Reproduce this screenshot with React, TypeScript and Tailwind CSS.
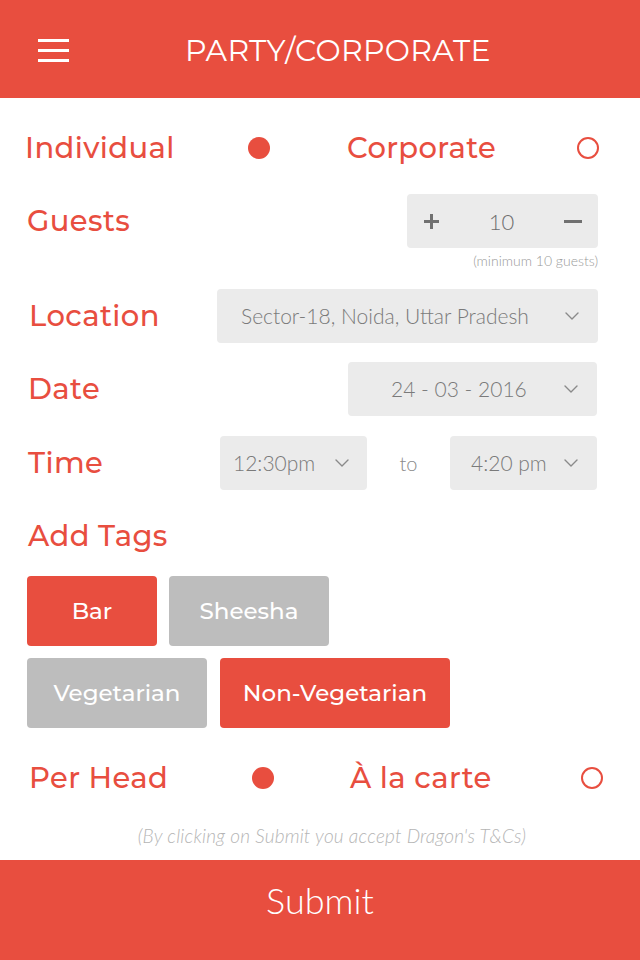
import React from 'react';

const RED = 'text-[#e84e3f]';

function Chevron() {
  return (
    <svg width="16" height="10" viewBox="0 0 16 10" fill="none" className="shrink-0">
      <path d="M2 2l6 6 6-6" stroke="#8a8a8a" strokeWidth="1.4" strokeLinecap="round" strokeLinejoin="round" />
    </svg>
  );
}

function Radio({ on }: { on: boolean }) {
  return on ? (
    <span className="block w-[22px] h-[22px] rounded-full bg-[#e84e3f]" />
  ) : (
    <span className="block w-[22px] h-[22px] rounded-full border-2 border-[#e84e3f]" />
  );
}

function Label({ children, className = '' }: { children: React.ReactNode; className?: string }) {
  return (
    <div className={`text-[29px] font-medium tracking-[0.4px] ${RED} font-['Montserrat','Noto_Sans',sans-serif] ${className}`}>
      {children}
    </div>
  );
}

export default function App() {
  return (
    <div className="w-[640px] h-[960px] bg-white flex flex-col font-['Lato',sans-serif] overflow-hidden">
      {/* header */}
      <header className="h-[98px] bg-[#e84e3f] flex items-center relative shrink-0">
        <div className="absolute left-[38px] top-[39px] flex flex-col gap-[7px]">
          <span className="block w-[31px] h-[3px] bg-white" />
          <span className="block w-[31px] h-[3px] bg-white" />
          <span className="block w-[31px] h-[3px] bg-white" />
        </div>
        <div className="flex-1 text-center pl-[36px] pt-[2px] text-white text-[30px] font-normal tracking-[0.3px] font-['Montserrat',sans-serif]">
          PARTY/CORPORATE
        </div>
      </header>

      <main className="flex-1 flex flex-col">
        {/* individual / corporate */}
        <div className="flex items-center h-[50px] mt-[25px] pl-[25px] pr-[41px]">
          <Label className="w-[223px]">Individual</Label>
          <Radio on />
          <Label className="ml-[77px] flex-1">Corporate</Label>
          <Radio on={false} />
        </div>

        {/* guests */}
        <div className="flex items-center mt-[21px] pl-[27px] pr-[42px]">
          <Label className="flex-1">Guests</Label>
          <div className="w-[191px] h-[54px] rounded-[4px] bg-[#ebebeb] flex items-center justify-between pl-[17px] pr-[16px] text-[#6e6e6e]">
            <span className="relative block w-[15px] h-[15px]">
              <span className="absolute left-0 top-[6px] w-[15px] h-[3px] bg-[#707070]" />
              <span className="absolute left-[6px] top-0 w-[3px] h-[15px] bg-[#707070]" />
            </span>
            <span className="text-[22px] font-light">10</span>
            <span className="block w-[18px] h-[3px] bg-[#707070]" />
          </div>
        </div>
        <div className="text-right pr-[42px] text-[14px] text-[#9a9a9a] font-light mt-[2px]">(minimum 10 guests)</div>

        {/* location */}
        <div className="flex items-center mt-[18px] pl-[29px] pr-[42px]">
          <Label className="flex-1">Location</Label>
          <div className="w-[381px] h-[54px] rounded-[4px] bg-[#ebebeb] flex items-center pl-[24px] pr-[18px] text-[#7a7a7a]">
            <span className="flex-1 text-[21px] font-light">Sector-18, Noida, Uttar Pradesh</span>
            <Chevron />
          </div>
        </div>

        {/* date */}
        <div className="flex items-center mt-[19px] pl-[28px] pr-[43px]">
          <Label className="flex-1">Date</Label>
          <div className="w-[249px] h-[54px] rounded-[4px] bg-[#ebebeb] flex items-center pl-[43px] pr-[18px] text-[#7a7a7a]">
            <span className="flex-1 text-[21px] font-light">24 - 03 - 2016</span>
            <Chevron />
          </div>
        </div>

        {/* time */}
        <div className="flex items-center mt-[20px] pl-[28px] pr-[43px]">
          <Label className="flex-1">Time</Label>
          <div className="w-[147px] h-[54px] rounded-[4px] bg-[#ebebeb] flex items-center pl-[13px] pr-[17px] text-[#7a7a7a]">
            <span className="flex-1 text-[21px] font-light">12:30pm</span>
            <Chevron />
          </div>
          <span className="w-[83px] text-center text-[20px] font-light text-[#8a8a8a]">to</span>
          <div className="w-[147px] h-[54px] rounded-[4px] bg-[#ebebeb] flex items-center pl-[21px] pr-[18px] text-[#7a7a7a]">
            <span className="flex-1 text-[21px] font-light">4:20 pm</span>
            <Chevron />
          </div>
        </div>

        {/* tags */}
        <Label className="pl-[28px] mt-[24px] leading-[44px]">Add Tags</Label>
        <div className="flex flex-col gap-[12px] pl-[27px] mt-[18px] font-['Montserrat','Noto_Sans',sans-serif] text-white text-[23px] font-medium">
          <div className="flex gap-[12px]">
            <div className="w-[130px] h-[70px] rounded-[4px] bg-[#e84e3f] flex items-center justify-center">Bar</div>
            <div className="w-[160px] h-[70px] rounded-[4px] bg-[#bdbdbd] flex items-center justify-center">Sheesha</div>
          </div>
          <div className="flex gap-[13px]">
            <div className="w-[180px] h-[70px] rounded-[4px] bg-[#bdbdbd] flex items-center justify-center">Vegetarian</div>
            <div className="w-[230px] h-[70px] rounded-[4px] bg-[#e84e3f] flex items-center justify-center">Non-Vegetarian</div>
          </div>
        </div>

        {/* per head / a la carte */}
        <div className="flex items-center h-[50px] mt-[25px] pl-[29px] pr-[37px]">
          <Label className="w-[223px]">Per Head</Label>
          <Radio on />
          <Label className="ml-[76px] flex-1">À la carte</Label>
          <Radio on={false} />
        </div>

        <div className="text-center pl-[24px] mt-[19px] text-[19px] tracking-[0.2px] italic font-light text-[#b5b5b5]">
          (By clicking on Submit you accept Dragon's T&amp;Cs)
        </div>
      </main>

      <footer className="h-[100px] bg-[#e84e3f] flex items-center justify-center pb-[20px] text-white text-[36px] font-light shrink-0">
        Submit
      </footer>
    </div>
  );
}
